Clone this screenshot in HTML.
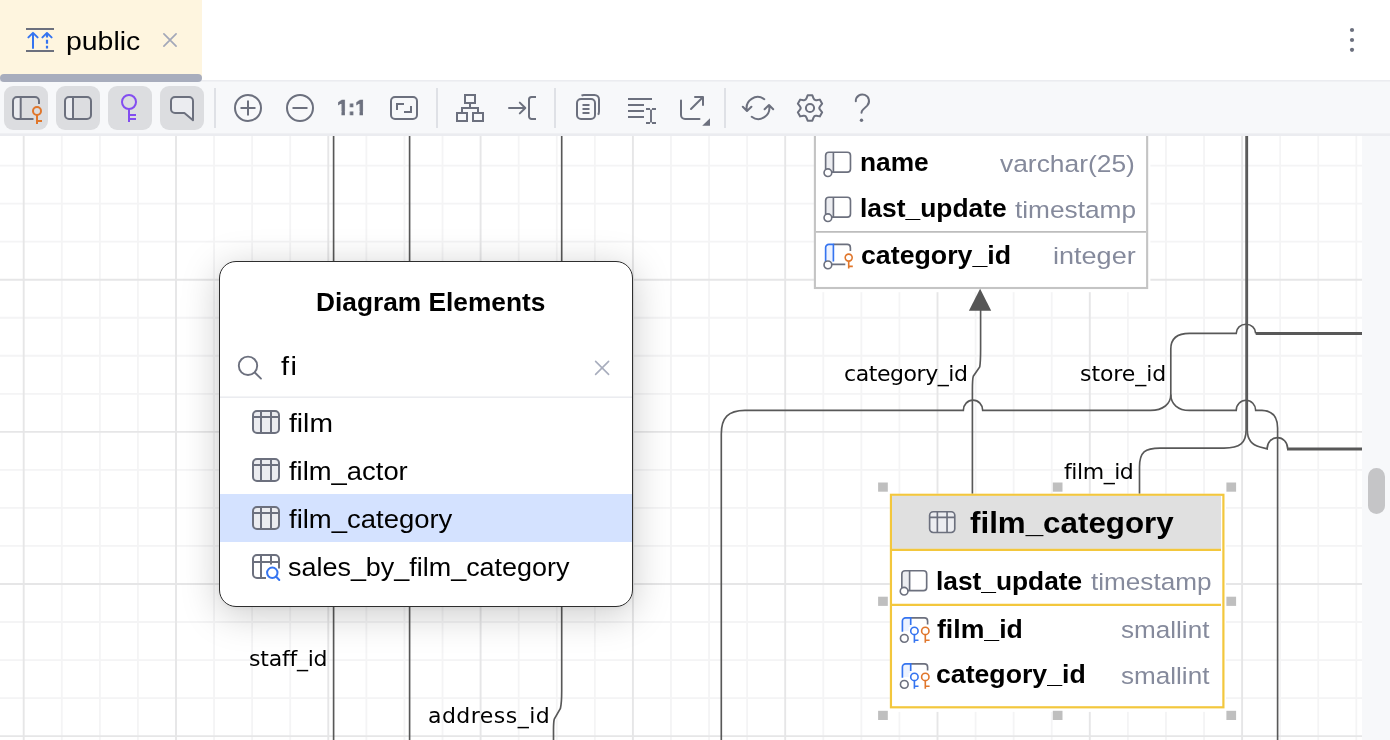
<!DOCTYPE html>
<html lang="en">
<head>
<meta charset="utf-8">
<title>public – Diagram</title>
<style>
*{box-sizing:border-box;margin:0;padding:0}
html,body{width:1390px;height:740px;overflow:hidden;background:#fff}
body{position:relative;font-family:"Liberation Sans",sans-serif;color:#000;-webkit-font-smoothing:antialiased}
.abs{position:absolute}
.t{position:absolute;white-space:nowrap;line-height:1;display:block;will-change:transform}
/* tab bar */
#tabbar{position:absolute;left:0;top:0;width:1390px;height:81px;background:#fff}
#tab{position:absolute;left:0;top:0;width:202px;height:78px;background:#FEF5DF}
#tabline{position:absolute;z-index:5;left:0;top:74px;width:202px;height:7.5px;border-radius:4px;background:#A8ADBD}
/* toolbar */
#toolbar{position:absolute;left:0;top:80px;width:1390px;height:56px;background:linear-gradient(to bottom,#EBECF0 0,#EBECF0 1px,#F0F1F4 1px,#F0F1F4 2px,#F7F8FA 2px,#F7F8FA 53.500px,#EFF0F3 53.500px,#EFF0F3 54px,#EBECF0 54px,#EBECF0 56px)}
.btn{position:absolute;top:86px;width:44px;height:44px;border-radius:9px;background:#DCDDE0}
.sep{position:absolute;top:88px;width:2px;height:40px;background:#DFE1E6}
/* canvas */
#canvas{position:absolute;left:0;top:136px;width:1362px;height:604px;overflow:hidden;background:#fff}
#vscroll{position:absolute;left:1362px;top:136px;width:28px;height:604px;background:#F7F8FA}
#thumb{position:absolute;left:6px;top:332px;width:16.5px;height:46px;border-radius:8.5px;background:#C5C5C7}
</style>
</head>
<body>

<div id="tabbar">
  <div id="tab">
    <svg class="abs" style="left:24px;top:24px" width="32" height="32" viewBox="0 0 32 32" fill="none">
      <rect x="2" y="4" width="28" height="2" fill="#6C707E"/>
      <rect x="2" y="26" width="28" height="2" fill="#6C707E"/>
      <g stroke="#3574F0" stroke-width="2" stroke-linecap="round" stroke-linejoin="round">
        <path d="M9 24V9.2M4.4 13.4L9 8.9L13.6 13.4"/>
        <path d="M18.4 13.4L23 8.9L22.9 8.9L27.6 13.4"/>
      </g>
      <g stroke="#3574F0" stroke-width="2.2" stroke-linecap="butt">
        <path d="M23 9.5V13.6M23 15.8V19.8M23 21.8V24.6"/>
      </g>
    </svg>
    <span class="t" id="t_tab" style="left:66.23px;top:27.69px;font-size:26px;letter-spacing:0.000px;transform:scaleX(1.0935);transform-origin:0 0;color:#000">public</span>
    <svg class="abs" style="left:160px;top:30px" width="20" height="20" viewBox="0 0 20 20" fill="none" stroke="#A3A8B9" stroke-width="1.7" stroke-linecap="round"><path d="M3.900 3.900L16.100 16.100M16.100 3.900L3.900 16.100"/></svg>
  </div>
  <div id="tabline"></div>
  <svg class="abs" style="left:1342px;top:24px" width="20" height="32" viewBox="0 0 20 32"><g fill="#6C707E"><circle cx="10" cy="6" r="2.1"/><circle cx="10" cy="16" r="2.1"/><circle cx="10" cy="25.8" r="2.1"/></g></svg>
</div>

<div id="toolbar"></div>
<div class="btn" style="left:4px"></div>
<div class="btn" style="left:56px"></div>
<div class="btn" style="left:108px"></div>
<div class="btn" style="left:160px"></div>
<div class="sep" style="left:214px"></div>
<div class="sep" style="left:436px"></div>
<div class="sep" style="left:554px"></div>
<div class="sep" style="left:724px"></div>
<svg id="tbicons" class="abs" style="left:0;top:80px" width="900" height="56" viewBox="0 80 900 56" fill="none" stroke="#6C707E" stroke-width="2" stroke-linecap="round" stroke-linejoin="round">
  <!-- 1: columns with key -->
  <path d="M13 97h7.7v22H17a4 4 0 0 1-4-4z" fill="#EBECF0" stroke="none"/>
  <path d="M39 104V101a4 4 0 0 0-4-4H17a4 4 0 0 0-4 4v14a4 4 0 0 0 4 4H33.5" stroke-linecap="butt"/>
  <path d="M20.7 97V119" stroke-linecap="butt"/>
  <g stroke="#E0762B" stroke-linecap="butt" stroke-linejoin="miter"><circle cx="37" cy="111" r="4"/><path d="M37 115V124M37 121H42"/></g>
  <!-- 2: columns -->
  <path d="M65 97h8v22H69a4 4 0 0 1-4-4z" fill="#EBECF0" stroke="none"/>
  <rect x="65" y="97" width="26" height="22" rx="4"/>
  <path d="M73 97V119" stroke-linecap="butt"/>
  <!-- 3: key purple -->
  <g stroke="#834DF0" stroke-linecap="butt" stroke-linejoin="miter"><circle cx="129" cy="102" r="7"/><path d="M129 109V122M129 115H136M129 119H136"/></g>
  <!-- 4: comment -->
  <path d="M175 97H189a4 4 0 0 1 4 4V120.3L184.4 113H175a4 4 0 0 1-4-4V101a4 4 0 0 1 4-4z" fill="#EBECF0"/>
  <!-- zoom in / out -->
  <circle cx="248" cy="108" r="13"/><path d="M240.5 108H255.500M248 100.500V115.500" stroke-linecap="butt"/>
  <circle cx="300" cy="108" r="13"/><path d="M292.500 108H307.500" stroke-linecap="butt"/>
  <!-- fit -->
  <rect x="391" y="97" width="26" height="22" rx="4"/>
  <path d="M397 110V104H404M404 112H411V106" stroke-linecap="butt" stroke-linejoin="miter"/>
  <!-- layout -->
  <g stroke-linecap="butt" stroke-linejoin="miter"><rect x="465" y="95" width="10" height="8"/><rect x="457" y="113" width="10" height="8"/><rect x="473" y="113" width="10" height="8"/><path d="M470 103V108M462 113V108H478V113"/></g>
  <!-- arrow to bracket -->
  <path d="M509 108H525M519.800 102.600L525.300 108L519.800 113.400"/>
  <path d="M536 97H531.500a2.500 2.500 0 0 0-2.500 2.500V116.500a2.500 2.500 0 0 0 2.500 2.500H536" stroke-linecap="butt"/>
  <!-- copy -->
  <rect x="577" y="99" width="18" height="20" rx="4"/>
  <path d="M582.500 105H589.500M582.500 109H589.500M582.500 113H589.500" stroke-width="1.800" stroke-linecap="butt"/>
  <path d="M581.500 95.600C582.200 95.200 583 95 584 95H594.500a4.500 4.500 0 0 1 4.500 4.500V111.500c0 1.200-0.300 2.300-0.900 3.200" stroke-linecap="butt"/>
  <!-- lines + cursor -->
  <path d="M628 99H652M628 105H644M628 111H644M628 117H644" stroke-linecap="butt"/>
  <path d="M651 109.500V122.500M646 109H650M652 109H656M646 123H650M652 123H656" stroke-linecap="butt" stroke-width="1.900"/>
  <!-- export -->
  <path d="M681 100.500V115a4 4 0 0 0 4 4H699.500M691 109L702.800 97.200M695 97H703V105"/>
  <path d="M710 118.200V125.700H702.200z" fill="#6C707E" stroke="none"/>
  <!-- refresh -->
  <path d="M764.300 99.200A11 11 0 0 0 747 110.600M742.800 106.800L747 111L751.400 106.800"/>
  <path d="M751.700 116.800A11 11 0 0 0 769 105.400M764.600 109.200L769 105L773.200 109.200"/>
  <!-- gear -->
  <g transform="translate(810 108)"><path d="M-2.35 -12.68L2.35 -12.68L3.52 -9.54Q4.30 -7.45 6.50 -7.82L9.81 -8.38L12.16 -4.31L10.02 -1.72Q8.60 0.00 10.02 1.72L12.16 4.31L9.81 8.38L6.50 7.82Q4.30 7.45 3.52 9.54L2.35 12.68L-2.35 12.68L-3.52 9.54Q-4.30 7.45 -6.50 7.82L-9.81 8.38L-12.16 4.31L-10.02 1.72Q-8.60 0.00 -10.02 -1.72L-12.16 -4.31L-9.81 -8.38L-6.50 -7.82Q-4.30 -7.45 -3.52 -9.54L-2.35 -12.68Z"/><circle cx="0" cy="0" r="4.100"/></g>
  <!-- help -->
  <path d="M855.800 101.200A6.600 6.600 0 1 1 867.200 105.600L863 109.600C861.900 110.700 861.500 111.500 861.500 112.800"/>
  <circle cx="861.500" cy="120.200" r="1.700" fill="#6C707E" stroke="none"/>
</svg>
<span class="t" id="t_oneone" style="left:337.30px;top:96.38px;font-size:22.7px;font-weight:700;letter-spacing:0.000px;transform:scaleX(0.9000);transform-origin:0 0;-webkit-text-stroke:0.7px #6C707E;color:#6C707E">1:1</span>
<svg class="abs" style="left:330px;top:106px;will-change:transform" width="42" height="12" viewBox="330 106 42 12"><g fill="#F7F8FA"><rect x="336.01" y="111.40" width="5.45" height="5.10"/><rect x="344.92" y="111.40" width="3.90" height="5.10"/><rect x="354.07" y="111.40" width="5.45" height="5.10"/><rect x="362.97" y="111.40" width="6.00" height="5.10"/></g></svg>

<div id="canvas">
<svg class="abs" style="left:0;top:0" width="1362" height="604" viewBox="0 136 1362 604" fill="none">
  <path id="grid-minor" d="M61.78 136V740M99.85 136V740M137.93 136V740M214.07 136V740M252.15 136V740M290.22 136V740M366.37 136V740M404.45 136V740M442.52 136V740M518.67 136V740M556.75 136V740M594.83 136V740M670.98 136V740M709.05 136V740M747.13 136V740M823.28 136V740M861.35 136V740M899.43 136V740M975.58 136V740M1013.65 136V740M1051.73 136V740M1127.88 136V740M1165.95 136V740M1204.03 136V740M1280.18 136V740M1318.25 136V740M1356.33 136V740M0 165.59H1362M0 203.63H1362M0 241.66H1362M0 317.74H1362M0 355.77H1362M0 393.80H1362M0 469.87H1362M0 507.91H1362M0 545.94H1362M0 622.01H1362M0 660.05H1362M0 698.08H1362" stroke="#F4F4F5" stroke-width="1.800"/>
  <path id="grid-major" d="M23.70 136V740M176.00 136V740M328.30 136V740M480.60 136V740M632.90 136V740M785.20 136V740M937.50 136V740M1089.80 136V740M1242.10 136V740M0 279.70H1362M0 431.84H1362M0 583.98H1362M0 736.12H1362" stroke="#E6E6E7" stroke-width="1.900"/>
  <g stroke="#585858" stroke-width="1.650" fill="none">
    <path d="M333.600 136V740"/>
    <path d="M409.600 136V740"/>
    <path d="M561.700 136V691Q561.700 703 560.400 708.500L554.300 719Q553.500 722 553.500 730V740"/>
    <!-- edge A: left 722 -> y410.4 -> up 1170.8 -> right y333.4 -->
    <path d="M721.300 740V434C721.300 418 728 410.400 745 410.400H963.300a9.700 10.200 0 0 1 19.400 0H1150.500C1163 410.400 1170.800 404 1170.800 394.500V349C1170.800 339 1177 333.400 1189.500 333.400H1236.200a9.750 9.200 0 0 1 19.500 0"/>
    <!-- edge B: 1277.6 vertical -> y410.4 -> left to 1170.8 -->
    <path d="M1277.600 740V428C1277.600 416 1272 410.800 1262 410.400H1255.700a9.750 10.200 0 0 0-19.500 0H1189.500C1178 410.400 1170.800 404 1170.800 394.500"/>
    <!-- category arrow line -->
    <path d="M980.600 310V349Q980.600 362 979.700 367L973.300 376.200Q972.400 379 972.400 390V495"/>
    <!-- film_id line -->
    <path d="M1246.100 136V430C1246.100 443 1240 448.100 1224 448.100H1160C1145 448.100 1139.500 452 1139.500 467V495"/>
    <!-- right branch -->
    <path d="M1247.300 136V430C1247.300 440 1252 445 1260 447L1267.200 448.900V448.200a10.200 10.600 0 0 1 20.400 0V448.900"/>
  </g>
  <g stroke="#585858" stroke-width="2.800" fill="none">
    <path d="M1255.700 333.500H1362"/>
    <path d="M1287 449H1362"/>
  </g>
<!-- category table frame -->
  <rect x="813.900" y="100" width="336.500" height="192.200" fill="#fff"/>
  <rect id="tbl-category" x="814.900" y="100" width="332.250" height="188" fill="#fff" stroke="#C4C4C4" stroke-width="2.100"/>
  <path d="M815.900 231.900H1146" stroke="#BDBDBD" stroke-width="1.900"/>
  <!-- film_category table frame (selected) -->
  <rect x="889.800" y="493.700" width="336.200" height="218.200" fill="#fff"/>
  <rect id="tbl-film-category" x="890.950" y="494.800" width="332.450" height="212.500" fill="#fff" stroke="#F3C73D" stroke-width="2.200"/>
  <rect x="892" y="495.900" width="329" height="53" fill="#E0E0E0"/>
  <path d="M892 549.900H1221M892 604.900H1221" stroke="#F3C73D" stroke-width="2.200"/>
  <path d="M980.100 288.800L991.200 310.700H968.900z" fill="#565656"/>
  <!-- diagram icons -->
  <g transform="translate(824.80 151.40)" stroke="#6C707E" stroke-width="1.65" fill="none">
    <path d="M0.825 4a3.200 3.200 0 0 1 3.200-3.200H8.600V20.600H0.825z" fill="#ECEDF1" stroke="none"/>
    <rect x="0.825" y="0.825" width="24.850" height="19.850" rx="3.200"/>
    <path d="M8.600 0.825V20.600"/>
    <circle cx="3.100" cy="21.300" r="3.850" fill="#fff" stroke-width="1.600"/>
  </g>
  <g transform="translate(824.80 196.40)" stroke="#6C707E" stroke-width="1.65" fill="none">
    <path d="M0.825 4a3.200 3.200 0 0 1 3.200-3.200H8.600V20.600H0.825z" fill="#ECEDF1" stroke="none"/>
    <rect x="0.825" y="0.825" width="24.850" height="19.850" rx="3.200"/>
    <path d="M8.600 0.825V20.600"/>
    <circle cx="3.100" cy="21.300" r="3.850" fill="#fff" stroke-width="1.600"/>
  </g>
  <g transform="translate(824.80 243.60)" stroke-width="1.65" fill="none">
    <path d="M0.825 4a3.200 3.200 0 0 1 3.200-3.200H8.600V20.600H0.825z" fill="#EDF3FF" stroke="none"/>
    <path d="M8.600 0.825H22.400a3.200 3.200 0 0 1 3.200 3.200V7.500M20.500 20.700H6" stroke="#6C707E"/>
    <path d="M0.825 18.500V4a3.200 3.200 0 0 1 3.200-3.200H8.600V18" stroke="#3574F0"/>
    <circle cx="3.100" cy="21.300" r="3.850" fill="#fff" stroke="#6C707E" stroke-width="1.600"/>
    <g stroke="#E0762B" stroke-width="1.600"><circle cx="23.900" cy="14" r="3.500" fill="#fff"/><path d="M23.900 17.500V25M23.900 22.800H28"/></g>
  </g>
  <g transform="translate(928.80 510.90)" stroke="#6C707E" stroke-width="1.65" fill="none">
    <rect x="0.825" y="0.825" width="25.15" height="20.75" rx="3.6" fill="#ECEDF1"/>
    <path d="M0.825 6.48H25.98M8.56 0.825V21.57M18.24 0.825V21.57"/>
  </g>
  <g transform="translate(901.00 569.90)" stroke="#6C707E" stroke-width="1.65" fill="none">
    <path d="M0.825 4a3.200 3.200 0 0 1 3.200-3.200H8.600V20.600H0.825z" fill="#ECEDF1" stroke="none"/>
    <rect x="0.825" y="0.825" width="24.850" height="19.850" rx="3.200"/>
    <path d="M8.600 0.825V20.600"/>
    <circle cx="3.100" cy="21.300" r="3.850" fill="#fff" stroke-width="1.600"/>
  </g>
  <g transform="translate(900.70 617.00)" stroke-width="1.65" fill="none">
    <path d="M1.700 4a3.200 3.200 0 0 1 3.200-3.200H10V10H8V14H1.700z" fill="#EDF3FF" stroke="none"/>
    <path d="M10 0.825H23.700a3.200 3.200 0 0 1 3.200 3.200V7.400" stroke="#6C707E"/>
    <path d="M1.700 14.700V4a3.200 3.200 0 0 1 3.200-3.200H10V8" stroke="#3574F0"/>
    <circle cx="3.600" cy="21.400" r="3.850" fill="#fff" stroke="#6C707E" stroke-width="1.600"/>
    <g stroke="#3574F0" stroke-width="1.600"><circle cx="13.700" cy="13.900" r="3.700" fill="#fff"/><path d="M13.700 17.600V25.700M13.700 23.200H17.800"/></g>
    <g stroke="#E0762B" stroke-width="1.600"><circle cx="24.600" cy="13.900" r="3.700" fill="#fff"/><path d="M24.600 17.600V25.700M24.600 23.200H28.900"/></g>
  </g>
  <g transform="translate(900.70 663.00)" stroke-width="1.65" fill="none">
    <path d="M1.700 4a3.200 3.200 0 0 1 3.200-3.200H10V10H8V14H1.700z" fill="#EDF3FF" stroke="none"/>
    <path d="M10 0.825H23.700a3.200 3.200 0 0 1 3.200 3.200V7.400" stroke="#6C707E"/>
    <path d="M1.700 14.700V4a3.200 3.200 0 0 1 3.200-3.200H10V8" stroke="#3574F0"/>
    <circle cx="3.600" cy="21.400" r="3.850" fill="#fff" stroke="#6C707E" stroke-width="1.600"/>
    <g stroke="#3574F0" stroke-width="1.600"><circle cx="13.700" cy="13.900" r="3.700" fill="#fff"/><path d="M13.700 17.600V25.700M13.700 23.200H17.800"/></g>
    <g stroke="#E0762B" stroke-width="1.600"><circle cx="24.600" cy="13.900" r="3.700" fill="#fff"/><path d="M24.600 17.600V25.700M24.600 23.200H28.900"/></g>
  </g>

  <g fill="#BFBFBF">
    <rect x="878.100" y="482.500" width="9.700" height="9.200"/><rect x="1052.800" y="482.500" width="9.700" height="9.200"/><rect x="1226.400" y="482.500" width="9.700" height="9.200"/>
    <rect x="878.100" y="596.700" width="9.700" height="9.200"/><rect x="1226.400" y="596.700" width="9.700" height="9.200"/>
    <rect x="878.100" y="710.800" width="9.700" height="9.200"/><rect x="1052.800" y="710.800" width="9.700" height="9.200"/><rect x="1226.400" y="710.800" width="9.700" height="9.200"/>
  </g>
</svg>
<div class="abs" id="world" style="left:0;top:-136px;width:1362px;height:740px">
  <!-- category table (partially visible) -->
  <span class="t" id="t_c_name" style="left:859.51px;top:150.23px;font-size:25.6px;font-weight:700;letter-spacing:0.000px;transform:scaleX(1.0280);transform-origin:0 0;color:#000">name</span><span class="t" id="t_c_name_t" style="left:999.66px;top:151.66px;font-size:24.5px;letter-spacing:0.000px;transform:scaleX(1.0767);transform-origin:0 0;color:#858A9C">varchar(25)</span>
  <span class="t" id="t_c_lu" style="left:859.94px;top:196.23px;font-size:25.6px;font-weight:700;letter-spacing:0.000px;transform:scaleX(1.0316);transform-origin:0 0;color:#000">last_update</span><span class="t" id="t_c_lu_t" style="left:1014.63px;top:197.66px;font-size:24.5px;letter-spacing:0.000px;transform:scaleX(1.0713);transform-origin:0 0;color:#858A9C">timestamp</span>
  <span class="t" id="t_c_cid" style="left:860.55px;top:243.03px;font-size:25.6px;font-weight:700;letter-spacing:0.000px;transform:scaleX(1.0446);transform-origin:0 0;color:#000">category_id</span><span class="t" id="t_c_cid_t" style="left:1052.71px;top:244.46px;font-size:24.5px;letter-spacing:0.000px;transform:scaleX(1.1040);transform-origin:0 0;color:#858A9C">integer</span>

  <!-- film_category table (selected) -->
  <span class="t" id="t_f_title" style="left:970.39px;top:508.31px;font-size:30px;font-weight:700;letter-spacing:0.000px;transform:scaleX(1.0443);transform-origin:0 0;color:#000">film_category</span>
  <span class="t" id="t_f_lu" style="left:935.77px;top:569.03px;font-size:25.6px;font-weight:700;letter-spacing:0.000px;transform:scaleX(1.0281);transform-origin:0 0;color:#000">last_update</span><span class="t" id="t_f_lu_t" style="left:1090.63px;top:570.46px;font-size:24.5px;letter-spacing:0.000px;transform:scaleX(1.0661);transform-origin:0 0;color:#858A9C">timestamp</span>
  <span class="t" id="t_f_fid" style="left:936.71px;top:617.13px;font-size:25.6px;font-weight:700;letter-spacing:0.000px;transform:scaleX(1.0402);transform-origin:0 0;color:#000">film_id</span><span class="t" id="t_f_fid_t" style="left:1121.30px;top:618.26px;font-size:24.5px;letter-spacing:0.000px;transform:scaleX(1.0642);transform-origin:0 0;color:#858A9C">smallint</span>
  <span class="t" id="t_f_cid" style="left:936.38px;top:662.13px;font-size:25.6px;font-weight:700;letter-spacing:0.000px;transform:scaleX(1.0418);transform-origin:0 0;color:#000">category_id</span><span class="t" id="t_f_cid_t" style="left:1121.30px;top:663.56px;font-size:24.5px;letter-spacing:0.000px;transform:scaleX(1.0642);transform-origin:0 0;color:#858A9C">smallint</span>

  <!-- edge labels -->
  <span class="t" id="t_l_cat" style="left:844.39px;top:362.58px;font-size:22px;font-family:'DejaVu Sans',sans-serif;letter-spacing:-0.438px;color:#000">category_id</span><span class="t" id="t_l_store" style="left:1079.74px;top:362.58px;font-size:22px;font-family:'DejaVu Sans',sans-serif;letter-spacing:-0.072px;color:#000">store_id</span><span class="t" id="t_l_film" style="left:1064.12px;top:461.08px;font-size:22px;font-family:'DejaVu Sans',sans-serif;letter-spacing:-0.442px;color:#000">film_id</span><span class="t" id="t_l_staff" style="left:249.34px;top:647.68px;font-size:22px;font-family:'DejaVu Sans',sans-serif;letter-spacing:-0.231px;color:#000">staff_id</span><span class="t" id="t_l_addr" style="left:428.46px;top:704.88px;font-size:22px;font-family:'DejaVu Sans',sans-serif;letter-spacing:0.462px;color:#000">address_id</span>

  <!-- popup -->
  <div class="abs" id="popup" style="left:219px;top:261px;width:414px;height:346px;border:1px solid #2e2e2e;border-radius:17px;background:#fff;box-shadow:0 7px 38px rgba(0,0,0,0.21),0 1px 6px rgba(0,0,0,0.05);overflow:hidden">
    <div class="abs" style="left:0;top:134px;width:414px;height:2px;background:linear-gradient(#F3F4F6 0,#F3F4F6 1px,#EBECF0 1px)"></div>
    <div class="abs" id="sel" style="left:0;top:232px;width:414px;height:48px;background:#D4E2FF"></div>
  </div>
  <svg class="abs" style="left:236px;top:354px" width="28" height="28" viewBox="236 354 28 28" fill="none" stroke="#6C707E" stroke-width="1.900" stroke-linecap="round"><circle cx="248" cy="365.800" r="9.200"/><path d="M254.800 372.500L261 378.600"/></svg>
  <svg class="abs" style="left:592px;top:358px" width="20" height="20" viewBox="592 358 20 20" fill="none" stroke="#A8ADBD" stroke-width="1.600" stroke-linecap="round"><path d="M595.600 361.400L608.600 374.400M608.600 361.400L595.600 374.400"/></svg>
  <span class="t" id="t_p_title" style="left:315.58px;top:289.84px;font-size:25.7px;font-weight:700;letter-spacing:0.000px;transform:scaleX(1.0236);transform-origin:0 0;color:#000">Diagram Elements</span><span class="t" id="t_p_q" style="left:280.58px;top:352.99px;font-size:26px;letter-spacing:1.400px;transform:scaleX(1.1134);transform-origin:0 0;color:#000">fi</span>
  <svg class="abs" style="left:252px;top:410px" width="28" height="24" viewBox="0 0 28 24" fill="none" stroke="#6C707E" stroke-width="2">
  <rect x="1.0" y="1.0" width="26" height="22" rx="4.0" fill="#EBECF0"/>
  <path d="M1.0 7.00H27.0M9.00 1.0V23.0M19.00 1.0V23.0"/>
</svg>
  <svg class="abs" style="left:252px;top:458px" width="28" height="24" viewBox="0 0 28 24" fill="none" stroke="#6C707E" stroke-width="2">
  <rect x="1.0" y="1.0" width="26" height="22" rx="4.0" fill="#EBECF0"/>
  <path d="M1.0 7.00H27.0M9.00 1.0V23.0M19.00 1.0V23.0"/>
</svg>
  <svg class="abs" style="left:252px;top:506px" width="28" height="24" viewBox="0 0 28 24" fill="none" stroke="#6C707E" stroke-width="2">
  <rect x="1.0" y="1.0" width="26" height="22" rx="4.0" fill="#EBECF0"/>
  <path d="M1.0 7.00H27.0M9.00 1.0V23.0M19.00 1.0V23.0"/>
</svg>
  <svg class="abs" style="left:250px;top:551px" width="32" height="32" viewBox="250 550 32 32" fill="none" stroke="#6C707E" stroke-width="2">
    <path d="M279 567.500V558a4 4 0 0 0-4-4H257a4 4 0 0 0-4 4V573a4 4 0 0 0 4 4H266M253 561H279M261 554V577M271 554V563.600"/>
    <g stroke="#3574F0" stroke-linecap="round"><circle cx="272.300" cy="571.800" r="5.200"/><path d="M276.200 575.800L279.300 579"/></g>
  </svg>
  <span class="t" id="t_p_1" style="left:289.07px;top:409.69px;font-size:26px;letter-spacing:0.000px;transform:scaleX(1.0855);transform-origin:0 0;color:#000">film</span><span class="t" id="t_p_2" style="left:289.16px;top:457.69px;font-size:26px;letter-spacing:0.000px;transform:scaleX(1.0537);transform-origin:0 0;color:#000">film_actor</span><span class="t" id="t_p_3" style="left:289.16px;top:505.69px;font-size:26px;letter-spacing:0.000px;transform:scaleX(1.0565);transform-origin:0 0;color:#000">film_category</span><span class="t" id="t_p_4" style="left:288.38px;top:553.69px;font-size:26px;letter-spacing:0.000px;transform:scaleX(1.0359);transform-origin:0 0;color:#000">sales_by_film_category</span>
</div>
</div>
<div id="vscroll"><div id="thumb"></div></div>

</body>
</html>
